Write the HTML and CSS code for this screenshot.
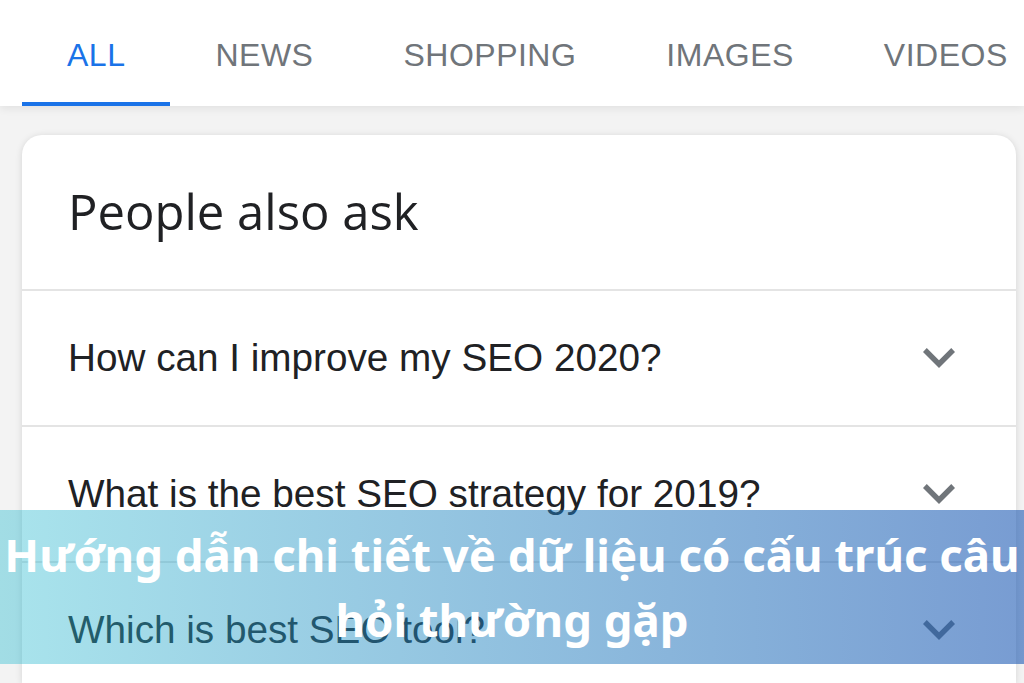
FILE: index.html
```html
<!DOCTYPE html>
<html lang="vi">
<head>
<meta charset="utf-8">
<title>People also ask</title>
<link rel="stylesheet" href="styles.css">
</head>
<body>
  <nav class="tabs">
    <div class="tab active">ALL</div>
    <div class="tab">NEWS</div>
    <div class="tab">SHOPPING</div>
    <div class="tab">IMAGES</div>
    <div class="tab">VIDEOS</div>
  </nav>

  <main class="results">
    <section class="card">
      <h2 class="card-title">People also ask</h2>
      <div class="question">
        <span class="question-text">How can I improve my SEO 2020?</span>
        <svg class="chevron" viewBox="6 8.59 12 7.41" aria-hidden="true"><path d="M16.59 8.59L12 13.17 7.41 8.59 6 10l6 6 6-6z"/></svg>
      </div>
      <div class="question">
        <span class="question-text">What is the best SEO strategy for 2019?</span>
        <svg class="chevron" viewBox="6 8.59 12 7.41" aria-hidden="true"><path d="M16.59 8.59L12 13.17 7.41 8.59 6 10l6 6 6-6z"/></svg>
      </div>
      <div class="question">
        <span class="question-text">Which is best SEO tool?</span>
        <svg class="chevron" viewBox="6 8.59 12 7.41" aria-hidden="true"><path d="M16.59 8.59L12 13.17 7.41 8.59 6 10l6 6 6-6z"/></svg>
      </div>
    </section>
  </main>

  <div class="banner">
    <p class="banner-text">Hướng dẫn chi tiết về dữ liệu có cấu trúc câu hỏi thường gặp</p>
  </div>
</body>
</html>
```

FILE: styles.css
```css
html, body {
  margin: 0;
  padding: 0;
}

body {
  width: 1024px;
  height: 683px;
  overflow: hidden;
  position: relative;
  background: #f3f3f3;
  font-family: "Liberation Sans", Arial, sans-serif;
}

/* Search tabs */
.tabs {
  display: flex;
  height: 106px;
  padding-left: 22px;
  background: #ffffff;
  box-shadow: 0 3px 8px rgba(0, 0, 0, 0.07);
  position: relative;
  z-index: 1;
}

.tab {
  box-sizing: border-box;
  height: 106px;
  padding: 37px 45px 0;
  border-bottom: 4px solid transparent;
  font-size: 32px;
  line-height: 37px;
  letter-spacing: 0.5px;
  color: #70757a;
  white-space: nowrap;
}

.tab.active {
  color: #1a73e8;
  border-bottom-color: #1a73e8;
}

/* Result card */
.results {
  padding: 29px 8px 0 22px;
}

.card {
  background: #ffffff;
  border-radius: 20px 20px 0 0;
  box-shadow: 0 1px 7px rgba(0, 0, 0, 0.13);
  height: 548px;
  overflow: hidden;
}

.card-title {
  box-sizing: border-box;
  height: 156px;
  margin: 0;
  padding: 0 0 2px 46px;
  display: flex;
  align-items: center;
  border-bottom: 2px solid #e4e4e4;
  font-family: "Open Sans", "Noto Sans", sans-serif;
  font-weight: 400;
  font-size: 49px;
  color: #202124;
}

.question {
  box-sizing: border-box;
  height: 136px;
  display: flex;
  align-items: center;
  justify-content: space-between;
  padding: 0 61px 0 46px;
  border-bottom: 2px solid #e4e4e4;
}

.question-text {
  font-size: 38.7px;
  color: #202124;
  white-space: nowrap;
}

.chevron {
  width: 32px;
  height: 20px;
  fill: #70757a;
  flex: none;
}

/* Title banner laid over the page */
.banner {
  position: absolute;
  left: 0;
  top: 510px;
  width: 1024px;
  height: 154px;
  display: flex;
  align-items: center;
  justify-content: center;
  background: linear-gradient(90deg, rgba(40, 188, 208, 0.4) 0%, rgba(30, 90, 180, 0.6) 100%);
  z-index: 2;
}

.banner-text {
  margin: 0;
  width: 1024px;
  text-align: center;
  font-family: "Noto Sans", "Open Sans", sans-serif;
  font-weight: 700;
  font-size: 45.5px;
  line-height: 65px;
  color: #ffffff;
}
```
